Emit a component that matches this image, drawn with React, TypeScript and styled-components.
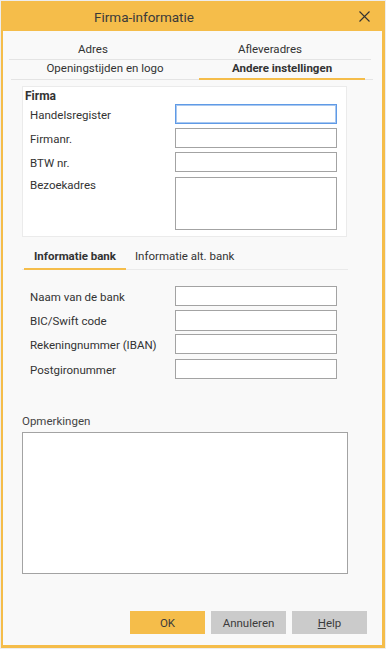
import styled, { createGlobalStyle } from "styled-components";

const GlobalStyle = createGlobalStyle`
    html, body {
        margin: 0;
        padding: 0;
        background: #ededed;
    }
    body {
        font-family: Roboto, "Noto Sans", sans-serif;
        color: #333333;
    }
`;

const Window = styled.div`
    box-sizing: border-box;
    width: 384px;
    height: 647px;
    margin: 1px 0 0 1px;
    background: #f9f9f9;
    border-style: solid;
    border-color: #f5bd4a;
    border-width: 0 3px 3px 2px;
    display: flex;
    flex-direction: column;
`;

const TitleBar = styled.div`
    height: 30px;
    background: #f5bd4a;
    display: flex;
    align-items: center;
    margin: 0 -3px 0 -2px;
`;

const Title = styled.div`
    font-size: 13.5px;
    color: #3a3a3a;
    padding-left: 93px;
    padding-top: 2px;
    flex: 1;
`;

const CloseButton = styled.button`
    border: none;
    background: transparent;
    padding: 0;
    width: 12px;
    height: 12px;
    margin-right: 15px;
    margin-top: 1px;
    display: flex;
    align-items: center;
    justify-content: center;
`;

const TabRow = styled.div<{ $inset: number; $height: number }>`
    display: flex;
    margin: 0 ${(p) => 17 - p.$inset}px 0 ${(p) => p.$inset}px;
    height: ${(p) => p.$height}px;
    border-bottom: 1px solid #e4e4e4;
    box-sizing: border-box;
`;

const Tab = styled.div<{ $width: number; $active?: boolean; $bottom?: number }>`
    width: ${(p) => p.$width}px;
    flex: none;
    display: flex;
    align-items: flex-end;
    justify-content: center;
    padding-bottom: ${(p) => p.$bottom ?? 3}px;
    box-sizing: border-box;
    font-size: 11.5px;
    color: #333;
    font-weight: ${(p) => (p.$active ? 700 : 400)};
    border-bottom: 2px solid ${(p) => (p.$active ? "#f5bd4a" : "transparent")};
    margin-bottom: -1px;
`;

const Panel = styled.div`
    margin: 6px 0 0 19px;
    width: 325px;
    height: 151px;
    box-sizing: border-box;
    background: #ffffff;
    border: 1px solid #ebebeb;
    padding: 2px 9px 0 2px;
`;

const PanelTitle = styled.div`
    font-size: 12px;
    font-weight: 700;
    color: #333;
    height: 14px;
    line-height: 14px;
    margin-bottom: 1px;
`;

const FieldRow = styled.div<{ $gap?: number }>`
    display: flex;
    align-items: center;
    justify-content: space-between;
    padding-left: 5px;
    margin-bottom: ${(p) => p.$gap ?? 4}px;
`;

const TopRow = styled(FieldRow)`
    align-items: flex-start;
`;

const Label = styled.div`
    font-size: 11.5px;
    color: #333;
    padding-top: 1px;
`;

const Input = styled.div<{ $focused?: boolean; $height?: number }>`
    width: 162px;
    height: ${(p) => p.$height ?? 20}px;
    box-sizing: border-box;
    background: #ffffff;
    border: 1px solid ${(p) => (p.$focused ? "#5f9ae6" : "#a3a3a3")};
    box-shadow: ${(p) => (p.$focused ? "inset 0 0 0 1px #a9c8f0" : "none")};
`;

const BankTabs = styled.div`
    display: flex;
    margin: 11px 0 0 19px;
    width: 326px;
    height: 22px;
    border-bottom: 1px solid #eaeaea;
    box-sizing: border-box;
`;

const BankTab = styled.div<{ $active?: boolean }>`
    font-size: 11.5px;
    color: #333;
    font-weight: ${(p) => (p.$active ? 700 : 400)};
    padding: 0 ${(p) => (p.$active ? 10 : 9)}px 5px;
    margin-left: ${(p) => (p.$active ? 2 : 0)}px;
    display: flex;
    align-items: flex-end;
    border-bottom: 2px solid ${(p) => (p.$active ? "#f5bd4a" : "transparent")};
    margin-bottom: -1px;
`;

const BankFields = styled.div`
    margin: 16px 0 0 22px;
    width: 312px;
`;

const NotesLabel = styled.div`
    margin: 35px 0 0 19px;
    font-size: 11.5px;
    color: #444;
    height: 15px;
    line-height: 15px;
`;

const NotesBox = styled.div`
    margin: 3px 0 0 19px;
    width: 326px;
    height: 142px;
    box-sizing: border-box;
    background: #ffffff;
    border: 1px solid #a3a3a3;
`;

const ButtonBar = styled.div`
    margin-top: auto;
    margin-bottom: 11px;
    display: flex;
    justify-content: flex-end;
    gap: 6px;
    padding-right: 15px;
`;

const Button = styled.button<{ $primary?: boolean }>`
    width: 75px;
    height: 23px;
    border: none;
    background: ${(p) => (p.$primary ? "#f5bd4a" : "#cbcbcb")};
    color: #3c3c3c;
    font-family: inherit;
    font-size: 11.5px;
    padding: 0;
    & u {
        text-decoration: underline;
    }
`;

export default function App() {
    return (
        <>
            <GlobalStyle />
            <Window>
                <TitleBar>
                    <Title>Firma-informatie</Title>
                    <CloseButton aria-label="Sluiten">
                        <svg width="11" height="11" viewBox="0 0 11 11">
                            <path d="M0.5 0.5 L10.5 10.5 M10.5 0.5 L0.5 10.5" stroke="#333" strokeWidth="1.1" />
                        </svg>
                    </CloseButton>
                </TitleBar>

                <TabRow $inset={6} $height={29}>
                    <Tab $width={168} $bottom={2}>Adres</Tab>
                    <Tab $width={186} $bottom={2}>Afleveradres</Tab>
                </TabRow>
                <TabRow $inset={8} $height={20}>
                    <Tab $width={188}>Openingstijden en logo</Tab>
                    <Tab $width={166} $active>Andere instellingen</Tab>
                </TabRow>

                <Panel>
                    <PanelTitle>Firma</PanelTitle>
                    <FieldRow>
                        <Label>Handelsregister</Label>
                        <Input $focused />
                    </FieldRow>
                    <FieldRow $gap={4}>
                        <Label>Firmanr.</Label>
                        <Input />
                    </FieldRow>
                    <FieldRow $gap={5}>
                        <Label>BTW nr.</Label>
                        <Input />
                    </FieldRow>
                    <TopRow $gap={0}>
                        <Label>Bezoekadres</Label>
                        <Input $height={53} />
                    </TopRow>
                </Panel>

                <BankTabs>
                    <BankTab $active>Informatie bank</BankTab>
                    <BankTab>Informatie alt. bank</BankTab>
                </BankTabs>

                <BankFields>
                    <FieldRow $gap={4}>
                        <Label>Naam van de bank</Label>
                        <Input />
                    </FieldRow>
                    <FieldRow $gap={3}>
                        <Label>BIC/Swift code</Label>
                        <Input $height={21} />
                    </FieldRow>
                    <FieldRow $gap={5}>
                        <Label>Rekeningnummer (IBAN)</Label>
                        <Input />
                    </FieldRow>
                    <FieldRow $gap={0}>
                        <Label>Postgironummer</Label>
                        <Input />
                    </FieldRow>
                </BankFields>

                <NotesLabel>Opmerkingen</NotesLabel>
                <NotesBox />

                <ButtonBar>
                    <Button $primary>OK</Button>
                    <Button>Annuleren</Button>
                    <Button>
                        <u>H</u>elp
                    </Button>
                </ButtonBar>
            </Window>
        </>
    );
}
